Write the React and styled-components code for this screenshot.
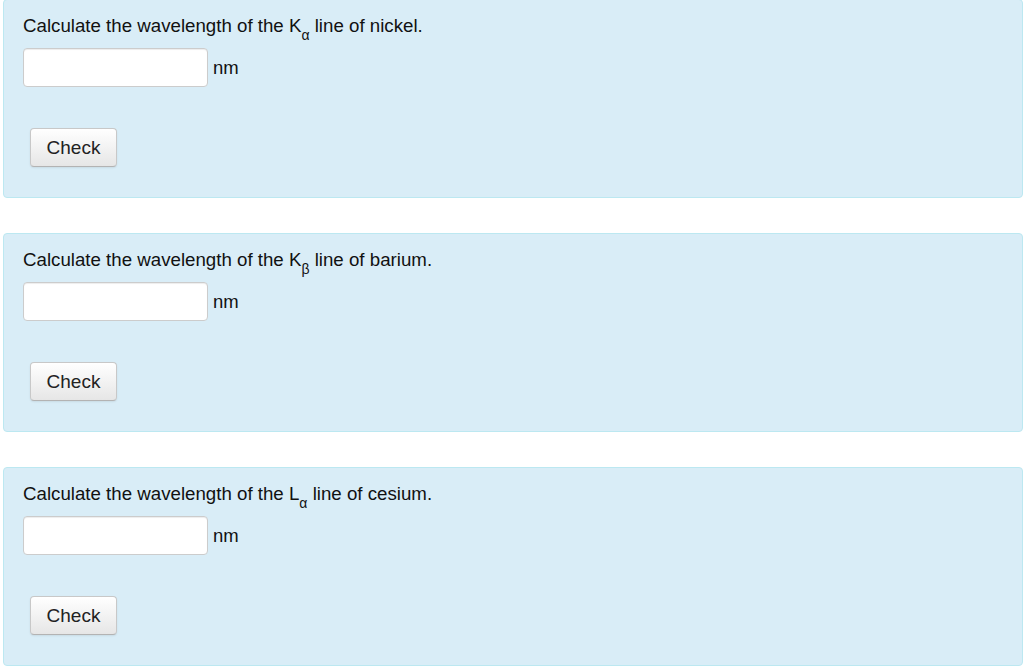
import React from "react";
import styled, { createGlobalStyle } from "styled-components";

const GlobalStyle = createGlobalStyle`
  body {
    margin: 0;
    background: #fff;
    font-family: "Liberation Sans", Arial, Helvetica, sans-serif;
  }
`;

const Page = styled.div`
  margin-top: -1px;
  padding-left: 3px;
  width: 1020px;
`;

const Panel = styled.div`
  box-sizing: border-box;
  height: 199px;
  margin-bottom: 35px;
  padding: 13px 19px 30px 19px;
  background: #d9edf7;
  border: 1px solid #bce8f1;
  border-radius: 4px;

  &:last-child {
    margin-bottom: 0;
  }
`;

const Question = styled.div`
  font-size: 18.7px;
  line-height: 25px;
  color: #111;
  white-space: nowrap;
`;

const Sub = styled.span`
  position: relative;
  top: 8px;
  font-size: 14px;
  line-height: 0;
`;

const InputRow = styled.div`
  display: flex;
  align-items: center;
  gap: 5px;
  margin-top: 10px;
`;

const Field = styled.input`
  box-sizing: border-box;
  width: 185px;
  height: 39px;
  margin: 0;
  padding: 4px 8px;
  background: #fff;
  border: 1px solid #ccc;
  border-radius: 4px;
  box-shadow: inset 0 1px 1px rgba(0, 0, 0, 0.075);
  font: inherit;
  font-size: 17px;
  outline: none;
`;

const Unit = styled.span`
  font-size: 18.5px;
  color: #111;
`;

const CheckButton = styled.button`
  box-sizing: border-box;
  display: block;
  width: 87px;
  height: 39px;
  margin: 41px 0 0 7px;
  padding: 0;
  font-family: inherit;
  font-size: 19px;
  color: #222;
  background: linear-gradient(#ffffff, #e6e6e6);
  border: 1px solid #c8c8c8;
  border-bottom-color: #b3b3b3;
  border-radius: 4px;
  box-shadow: 0 1px 2px rgba(0, 0, 0, 0.08);
  cursor: pointer;
`;

const questions = [
  { line: "K", sub: "α", element: "nickel" },
  { line: "K", sub: "β", element: "barium" },
  { line: "L", sub: "α", element: "cesium" },
];

export default function App() {
  return (
    <>
      <GlobalStyle />
      <Page>
        {questions.map((q, i) => (
          <Panel key={i}>
            <Question>
              Calculate the wavelength of the {q.line}
              <Sub>{q.sub}</Sub> line of {q.element}.
            </Question>
            <InputRow>
              <Field type="text" />
              <Unit>nm</Unit>
            </InputRow>
            <CheckButton>Check</CheckButton>
          </Panel>
        ))}
      </Page>
    </>
  );
}
